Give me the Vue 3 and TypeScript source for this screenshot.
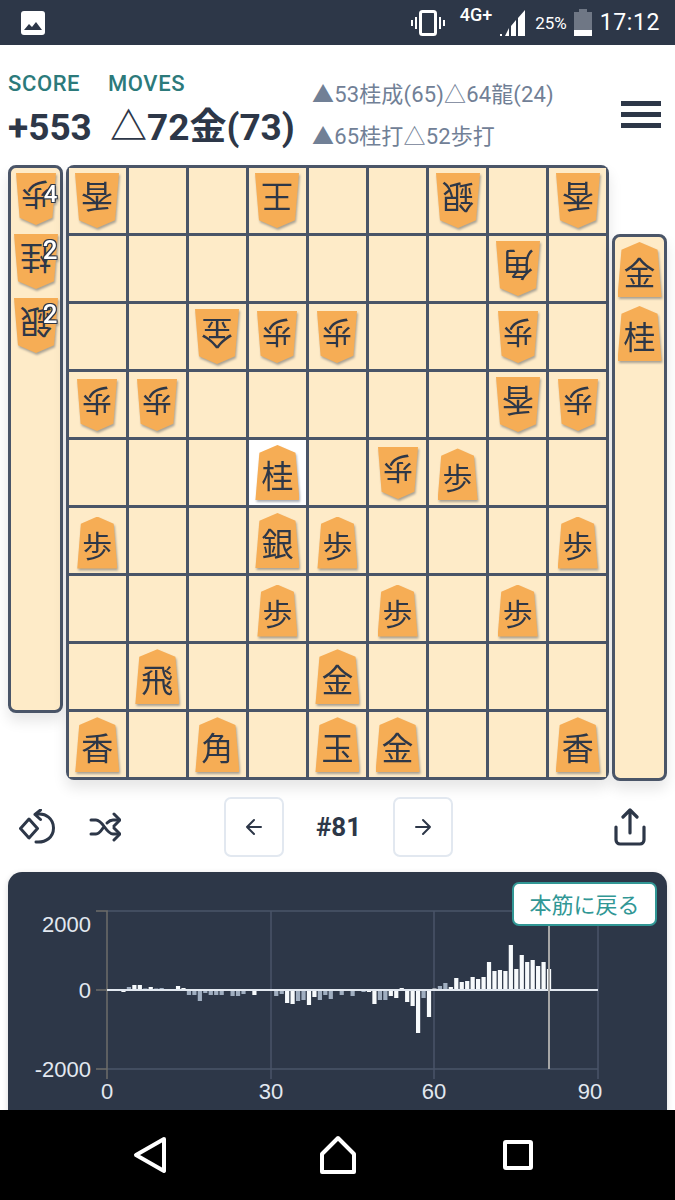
<script setup lang="ts">
type Piece = { name: string; opp: boolean; count?: number };

const rows = [
  'v香 . . v王 . . v銀 . v香',
  '. . . . . . . v角 .',
  '. . v金 v歩 v歩 . . v歩 .',
  'v歩 v歩 . . . . . v香 v歩',
  '. . . 桂 . v歩 歩 . .',
  '歩 . . 銀 歩 . . . 歩',
  '. . . 歩 . 歩 . 歩 .',
  '. 飛 . . 金 . . . .',
  '香 . 角 . 玉 金 . . 香',
];

const parse = (s: string): Piece | null => {
  if (s === '.') return null;
  return s[0] === 'v' ? { name: s[1], opp: true } : { name: s, opp: false };
};

const cells = rows.flatMap((r) => r.split(' ').map(parse));
const lastMove = 4 * 9 + 3;

const leftHand: Piece[] = [
  { name: '歩', opp: true, count: 4 },
  { name: '桂', opp: true, count: 2 },
  { name: '銀', opp: true, count: 2 },
];
const rightHand: Piece[] = [
  { name: '金', opp: false },
  { name: '桂', opp: false },
];

// bar height in px per move
const scores = [
  0, 0, 0, -2, 3, 5, 5, 1.5, 3, 1.5, 2, 0, 1, 4, 2, -5, -5, -11, -3, -5, -5, -5, 1, -6, -6, -4, 0.5, -5, -1, 1,
  0, -6, -4, -13, -14, -11, -10, -15, -7, -10, -5, -9, 0, -5, 0, -6, 0, -2, -2, -14, -10, -10, -6, -8, 2, -12, -16, -43, -8, -27,
  1.5, 4, 7, 3, 12, 8, 9, 13, 11, 13, 28, 19, 20, 19, 45, 21, 35, 28, 30, 24, 28, 21,
];
const dim = new Set([4, 7, 9, 10, 12, 15, 16, 17, 18, 19, 20, 21, 22, 23, 24, 25, 28, 31, 32, 35, 36, 39, 40, 41, 43, 45, 47, 50, 51, 58, 61, 62]);

const bars = scores.map((v, i) => ({
  x: 107 + i * 5.456 - 2,
  y: v > 0 ? 989 - v : 989,
  h: Math.abs(v),
  fill: dim.has(i) ? '#a0aec0' : '#f7fafc',
}));

const xLines = [271, 434, 598];
</script>

<template>
  <div class="screen">
    <div class="status">
      <svg class="gallery" width="24" height="24" viewBox="0 0 24 24">
        <rect width="24" height="24" rx="3" fill="#fff" />
        <path d="M3 19l5-6 3 3 4-5 6 8z" fill="#2d3748" />
      </svg>
      <div class="status-right">
        <svg width="34" height="26" viewBox="0 0 34 26" fill="none" stroke="#fff">
          <rect x="9.500" y="1.500" width="15" height="23" rx="2" stroke-width="3" />
          <path d="M5 7v12M1 10v6M29 7v12M33 10v6" stroke-width="2" />
        </svg>
        <span class="net">4G+</span>
        <svg width="26" height="26" viewBox="0 0 26 26" fill="#fff">
          <path d="M0 26h2v-2H0zM5 26h4v-8zM11 26h5V10l-5 6zM18 26h7V0l-7 8z" />
        </svg>
        <span class="pct">25%</span>
        <div class="battery"><div class="battery-cap"></div><div class="battery-body"><div class="battery-fill"></div></div></div>
        <span class="clock">17:12</span>
      </div>
    </div>

    <div class="main">
      <header class="head">
        <div class="score">
          <div class="label">SCORE</div>
          <div class="value">+553</div>
        </div>
        <div class="moves">
          <div class="label">MOVES</div>
          <div class="value">△72金(73)</div>
        </div>
        <div class="cands">
          <div>▲53桂成(65)△64龍(24)</div>
          <div>▲65桂打△52歩打</div>
        </div>
        <div class="menu"><i></i><i></i><i></i></div>
      </header>

      <div class="table">
        <div class="hand hand-left">
          <div v-for="p in leftHand" :key="p.name" class="piece" :class="{ small: p.name === '歩' }">
            <div class="shape opp">{{ p.name }}</div>
            <span class="count" :class="{ four: p.count === 4 }">{{ p.count }}</span>
          </div>
        </div>
        <div class="board">
          <div v-for="(c, i) in cells" :key="i" class="cell" :class="{ last: i === lastMove }">
            <div v-if="c" class="piece" :class="{ small: c.name === '歩', up: !c.opp }">
              <div class="shape" :class="{ opp: c.opp }">{{ c.name }}</div>
            </div>
          </div>
        </div>
        <div class="hand hand-right">
          <div v-for="p in rightHand" :key="p.name" class="piece">
            <div class="shape">{{ p.name }}</div>
          </div>
        </div>
      </div>

      <div class="controls">
        <div class="tools">
          <svg width="36" height="36" viewBox="0 0 36 36" fill="none" stroke="#2d3748" stroke-width="3" stroke-linecap="round" stroke-linejoin="round">
            <path d="M10 10l8.500 9.500L10 29l-8.500-9.500z" />
            <path d="M17 5.500C27 3.500 34.500 10 34.500 19S27 34 17 33" />
            <path d="M21.500 1L16 5.500l5.500 5" />
          </svg>
          <svg width="32" height="32" viewBox="0 0 32 32" fill="none" stroke="#2d3748" stroke-width="3" stroke-linecap="round" stroke-linejoin="round">
            <path d="M2 9h5c7 0 10 14 17 14h6M2 23h5c3 0 5-3 7-6M18 12c2-2 3-3 6-3h6" />
            <path d="M25 3l6 6-6 6M25 17l6 6-6 6" />
          </svg>
        </div>
        <div class="pager">
          <button class="nav-btn">
            <svg width="20" height="20" viewBox="0 0 20 20" fill="none" stroke="#2d3748" stroke-width="2" stroke-linecap="round" stroke-linejoin="round"><path d="M17 10H3M10 3l-7 7 7 7" /></svg>
          </button>
          <span class="num">#81</span>
          <button class="nav-btn">
            <svg width="20" height="20" viewBox="0 0 20 20" fill="none" stroke="#2d3748" stroke-width="2" stroke-linecap="round" stroke-linejoin="round"><path d="M3 10h14M10 3l7 7-7 7" /></svg>
          </button>
        </div>
        <svg class="share" width="32" height="38" viewBox="0 0 32 38" fill="none" stroke="#2d3748" stroke-width="3.200" stroke-linecap="round" stroke-linejoin="round">
          <path d="M2 19v13a4 4 0 0 0 4 4h20a4 4 0 0 0 4-4V19M16 25V2M9 9l7-7 7 7" />
        </svg>
      </div>

      <div class="chart">
        <svg class="plot" width="659" height="240" viewBox="8 871 659 240">
          <g stroke="#4a5568" stroke-width="1.500">
            <path d="M107 910H598M107 1068H598" />
            <path v-for="x in xLines" :key="x" :d="`M${x} 910V1078`" />
          </g>
          <path d="M96 910H107V1078M96 989H107M96 1068H107" stroke="#6e6e69" stroke-width="1.500" fill="none" />
          <rect v-for="(b, i) in bars" :key="i" :x="b.x" :y="b.y" width="4.200" :height="b.h" :fill="b.fill" />
          <path d="M107 989H598" stroke="#e2e8f0" stroke-width="2" />
          <path d="M549 910V1068" stroke="#a6a6a6" stroke-width="2" />
          <g class="ticks">
            <text x="91" y="931" text-anchor="end">2000</text>
            <text x="91" y="997" text-anchor="end">0</text>
            <text x="91" y="1076" text-anchor="end">-2000</text>
            <text x="107" y="1098" text-anchor="middle">0</text>
            <text x="271" y="1098" text-anchor="middle">30</text>
            <text x="434" y="1098" text-anchor="middle">60</text>
            <text x="590" y="1098" text-anchor="middle">90</text>
          </g>
        </svg>
        <button class="back">本筋に戻る</button>
      </div>
    </div>

    <div class="navbar">
      <svg width="34" height="38" viewBox="0 0 34 38" fill="none" stroke="#fff" stroke-width="4" stroke-linejoin="round"><path d="M31 3L3 19l28 16z" /></svg>
      <svg width="40" height="40" viewBox="0 0 40 40" fill="none" stroke="#fff" stroke-width="4" stroke-linejoin="round"><path d="M20 3L36 19v18H4V19z" /></svg>
      <svg width="30" height="30" viewBox="0 0 30 30" fill="none" stroke="#fff" stroke-width="4"><rect x="2" y="2" width="26" height="26" rx="1" /></svg>
    </div>
  </div>
</template>

<style scoped>
.screen {
  width: 675px;
  height: 1200px;
  display: flex;
  flex-direction: column;
  overflow: hidden;
  background: #fff;
  font-family: Roboto, "Noto Sans CJK JP", sans-serif;
  color: #2d3748;
}

.status {
  height: 45px;
  flex: none;
  display: flex;
  align-items: center;
  justify-content: space-between;
  padding: 0 15px 0 21px;
  background: #2d3748;
  color: #fff;
}
.status-right {
  display: flex;
  align-items: center;
}
.net {
  font-size: 18px;
  font-weight: 500;
  margin: -16px 8px 0 15px;
}
.pct {
  font-size: 17px;
  margin: 0 7px 0 9px;
}
.battery {
  width: 18px;
  height: 27px;
  display: flex;
  flex-direction: column;
  align-items: center;
}
.battery-cap {
  width: 8px;
  height: 3px;
  background: #6f7785;
}
.battery-body {
  flex: 1;
  width: 100%;
  display: flex;
  align-items: flex-end;
  background: #6f7785;
}
.battery-fill {
  width: 100%;
  height: 6px;
  background: #fff;
}
.clock {
  font-size: 23px;
  margin-left: 8px;
  letter-spacing: 0.6px;
}

.main {
  flex: 1;
  min-height: 0;
  overflow: hidden;
}

.head {
  height: 120px;
  display: flex;
  padding: 26px 0 0 8px;
  box-sizing: border-box;
}
.score {
  width: 100px;
}
.moves {
  width: 204px;
}
.label {
  height: 26px;
  line-height: 26px;
  font-size: 22px;
  font-weight: 500;
  letter-spacing: 0.6px;
  color: #2c7a7b;
}
.value {
  margin-top: 8px;
  line-height: 46px;
  font-size: 37px;
  font-weight: 700;
  white-space: nowrap;
}
.moves .value {
  margin-left: 2px;
}
.cands {
  width: 309px;
  padding-top: 3px;
  font-size: 22px;
  letter-spacing: 0.15px;
  line-height: 42px;
  color: #718096;
  white-space: nowrap;
}
.menu {
  width: 40px;
  margin-top: 30px;
  display: flex;
  flex-direction: column;
  gap: 6px;
}
.menu i {
  display: block;
  height: 5px;
  background: #2d3748;
}

.table {
  display: flex;
  gap: 3px;
  padding: 0 8px;
}
.hand {
  width: 55px;
  box-sizing: border-box;
  padding-top: 5px;
  display: flex;
  flex-direction: column;
  align-items: center;
  gap: 9px;
  background: #feebc8;
  border: 3px solid #4a5568;
  border-radius: 8px;
  box-shadow: 0 8px 14px rgba(0, 0, 0, 0.1);
}
.hand-left {
  height: 548px;
}
.hand-right {
  height: 547px;
  margin-top: 69px;
}
.board {
  width: 543px;
  height: 615px;
  box-sizing: border-box;
  padding: 3px;
  display: grid;
  grid-template-columns: repeat(9, 1fr);
  grid-template-rows: repeat(9, 1fr);
  gap: 3.5px;
  background: #4a5568;
  border-radius: 8px;
  box-shadow: 0 8px 14px rgba(0, 0, 0, 0.1);
}
.cell {
  display: flex;
  align-items: center;
  justify-content: center;
  background: #feebc8;
}
.cell.last {
  background: #fff;
}

.piece {
  position: relative;
  width: 44px;
  height: 55px;
  flex: none;
  filter: drop-shadow(1px 2px 1px rgba(45, 55, 72, 0.4));
}
.piece.small {
  width: 40px;
  height: 52px;
}
.cell .piece.small {
  margin-top: 2px;
}
.cell .piece.small.up {
  margin-top: 4px;
}
.shape {
  width: 100%;
  height: 100%;
  padding-top: 3px;
  box-sizing: border-box;
  display: flex;
  align-items: center;
  justify-content: center;
  background: #f6ad55;
  clip-path: polygon(50% 0, 91% 14%, 100% 100%, 0 100%, 9% 14%);
  font-family: "Noto Sans CJK JP", sans-serif;
  font-size: 32px;
  color: #2d3748;
}
.piece.small .shape {
  font-size: 30px;
}
.shape.opp {
  transform: rotate(180deg);
}
.count {
  position: absolute;
  top: 6px;
  right: 0;
  font-size: 26px;
  font-weight: 500;
  line-height: 20px;
  color: #fff;
  text-shadow: 1px 1px 0 #2d3748, -1px 1px 0 #2d3748, 1px -1px 0 #2d3748, -1px -1px 0 #2d3748;
}
.count.four {
  top: 11px;
  right: -2px;
  font-size: 24px;
}

.controls {
  height: 91px;
  display: flex;
  align-items: center;
  padding: 0 29px 0 19px;
}
.tools {
  width: 205px;
  display: flex;
  align-items: center;
  gap: 34px;
}
.pager {
  display: flex;
  align-items: center;
  gap: 30px;
  margin-right: auto;
}
.nav-btn {
  width: 60px;
  height: 60px;
  padding: 0;
  display: flex;
  align-items: center;
  justify-content: center;
  background: #fff;
  border: 2px solid #e2e8f0;
  border-radius: 7px;
}
.num {
  width: 49px;
  text-align: center;
  font-size: 26px;
  font-weight: 700;
  white-space: nowrap;
}

.chart {
  position: relative;
  height: 270px;
  margin: 0 8px;
  background: #2d3748;
  border-radius: 14px;
  box-shadow: 0 2px 6px rgba(0, 0, 0, 0.15);
}
.plot {
  display: block;
}
.ticks text {
  font-family: "Liberation Sans", Arial, sans-serif;
  font-size: 22px;
  fill: #e2e8f0;
}
.back {
  position: absolute;
  top: 10px;
  right: 10px;
  width: 145px;
  height: 44px;
  padding: 0 0 2px;
  background: #fff;
  border: 2px solid #319795;
  border-radius: 7px;
  font-family: "Noto Sans CJK JP", sans-serif;
  font-size: 22px;
  color: #319795;
}

.navbar {
  height: 90px;
  flex: none;
  display: flex;
  align-items: center;
  gap: 151px;
  background: #000;
  padding-left: 133px;
}
.navbar svg:nth-child(2) {
  margin-right: -6px;
}
</style>
<style>
html, body {
  margin: 0;
  background: #fff;
}
</style>
